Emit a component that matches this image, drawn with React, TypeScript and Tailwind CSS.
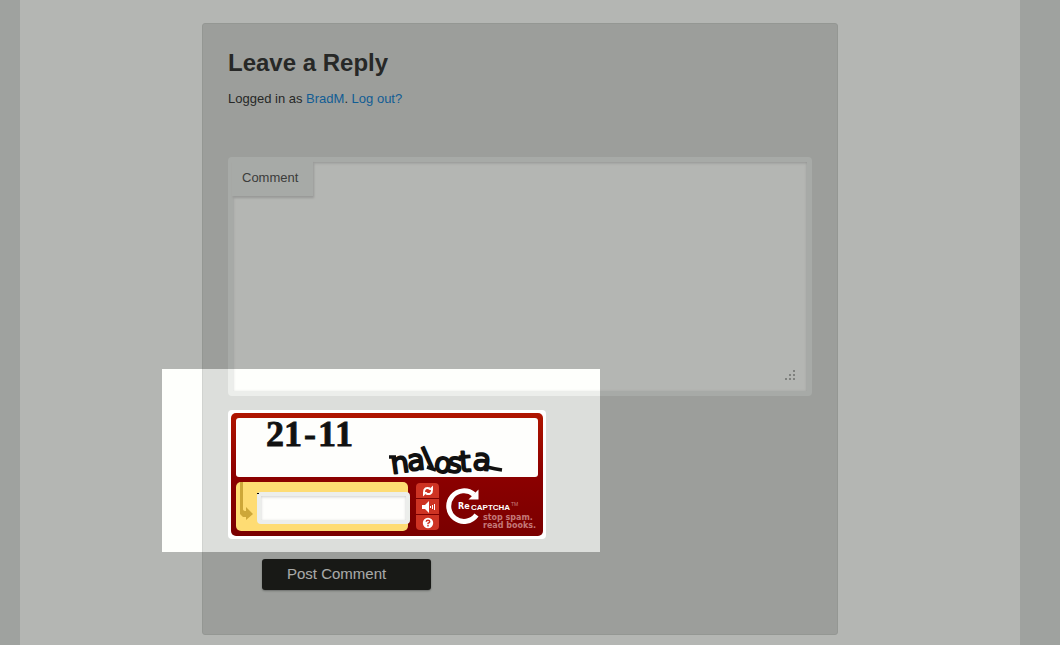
import { useState } from "react";

const letters = [
  { ch: "n", x: 392, y: 474, r: -8, size: 29 },
  { ch: "a", x: 408, y: 471, r: -6, size: 29 },
  { ch: "l", x: 428, y: 469, r: -24, size: 29 },
  { ch: "o", x: 433, y: 471, r: 10, size: 28 },
  { ch: "s", x: 447, y: 472, r: 4, size: 28 },
  { ch: "t", x: 460, y: 472, r: -4, size: 29 },
  { ch: "a", x: 472, y: 469, r: 6, size: 30 },
];

function Challenge() {
  return (
    <svg viewBox="236 418 302 59" className="block h-[59px] w-full overflow-visible rounded-[3px] bg-[#fefefc]" role="img" aria-label="Captcha challenge">
      <text x="266 284 304 318 335" y="446" fontFamily="Liberation Serif, serif" fontSize="36" fontWeight="700" fill="#111" stroke="#111" strokeWidth="0.8">21-11</text>
      <g fontFamily="DejaVu Sans, sans-serif" fill="#111" stroke="#111" strokeWidth="1.800" strokeLinejoin="round">
        {letters.map((l, i) => (
          <text key={i} x={l.x} y={l.y} fontSize={l.size} transform={`rotate(${l.r} ${l.x} ${l.y})`}>{l.ch}</text>
        ))}
      </g>
      <path d="M389 457l7 0M427 467l9 3M487 467q8 2 15 3" stroke="#111" strokeWidth="3.500" fill="none" />
    </svg>
  );
}

function Logo() {
  return (
    <svg viewBox="444 484 96 48" className="h-12 w-24 shrink-0" role="img" aria-label="reCAPTCHA">
      <path d="M474 494.500A15.300 15.300 0 1 0 476.500 515" fill="none" stroke="#fff" strokeWidth="5" />
      <path d="M478.500 489.500V499.500H468.500z" fill="#fff" />
      <text x="458" y="509" fontFamily="DejaVu Sans, sans-serif" fontSize="8" fontWeight="700" fill="#fff">Re</text>
      <text x="471" y="510" fontFamily="Liberation Sans Narrow, Liberation Sans, sans-serif" fontSize="8" fontWeight="700" fill="#fff">CAPTCHA</text>
      <text x="511" y="506" fontFamily="Liberation Sans, sans-serif" fontSize="5" fill="#c98080">TM</text>
      <g fontFamily="DejaVu Sans, sans-serif" fontSize="8" fontWeight="700" fill="#c47878">
        <text x="483" y="520">stop spam.</text>
        <text x="483" y="528">read books.</text>
      </g>
    </svg>
  );
}

function Recaptcha() {
  const [answer, setAnswer] = useState("");
  const control = "flex h-[15px] w-full items-center justify-center bg-[#ce3323]";
  return (
    <div className="mt-[14px] w-[318px] rounded-[4px] bg-white p-[3px]">
      <div className="rounded-[5px] bg-linear-to-b from-[#b01500] via-[#8c0000] to-[#7a0000] p-[5px]">
        <Challenge />
        <div className="mt-[5px] flex h-[49px] items-start">
          <div className="flex h-[49px] w-[172px] shrink-0 items-start rounded-[5px] bg-[#fedc73]">
            <svg viewBox="0 0 21 49" className="relative z-10 h-[49px] w-[21px] shrink-0 overflow-visible" aria-hidden="true">
              <path d="M4 0h3v27q0 2 3 2v-4l7 7-7 6v-3H7L4 32z" fill="#cda739" />
              <path d="M21 11h2v1h-2z" fill="#000" />
            </svg>
            <input
              aria-label="Type the two words"
              value={answer}
              onChange={(e) => setAnswer(e.target.value)}
              className="mt-[10px] h-8 w-[153px] shrink-0 rounded-[4px] border-[4px] border-[#eceeeb] bg-[#fefefc] px-1 text-sm shadow-[inset_0_1px_3px_rgba(204,204,204,0.95)] outline-none"
            />
          </div>
          <div className="mt-px ml-2 flex w-[23px] shrink-0 flex-col gap-px overflow-hidden rounded-[4px] bg-[#7a0000]">
            <button type="button" aria-label="Get a new challenge" className={control}>
              <svg viewBox="0 0 12 12" className="h-3 w-3" fill="none" stroke="#fff" strokeWidth="2">
                <path d="M2 7.500C1.800 3.500 4.500 2 8 3.500M10 4.500C10.200 8.500 7.500 10 4 8.500" />
                <path d="M11 0.500V5H6.500zM1 11.500V7H5.500z" fill="#fff" stroke="none" />
              </svg>
            </button>
            <button type="button" aria-label="Get an audio challenge" className={control}>
              <svg viewBox="0 0 14 12" className="h-3 w-[14px]" fill="#fff">
                <path d="M1 4h3l4-4v12L4 8H1zM9 5h1v2H9zM11 4h1v4h-1zM13 3h1v6h-1z" />
              </svg>
            </button>
            <button type="button" aria-label="Help" className={control}>
              <svg viewBox="0 0 12 12" className="h-3 w-3">
                <circle cx="6" cy="6" r="5.200" fill="#fff" />
                <path d="M4.200 4.800Q4.200 3.200 6 3.200T7.800 4.800Q7.800 5.600 6 6.300V7.200M6 8v1.400" fill="none" stroke="#ce3323" strokeWidth="1.400" />
              </svg>
            </button>
          </div>
          <div className="ml-[5px] mt-[2px]">
            <Logo />
          </div>
        </div>
      </div>
    </div>
  );
}

export default function App() {
  return (
    <div className="relative min-h-screen overflow-hidden bg-[#e1e3e0] pr-10 pl-5 font-['Liberation_Sans',Arial,sans-serif] text-[#373737]">
      <main className="min-h-screen bg-[#fefffc] px-[182px] pt-[23px] pb-[10px]">
        <section className="rounded-[3px] border border-[#d1d3d0] bg-[#dcdedb] px-[25px] pt-6 pb-11">
          <h1 className="text-[24px] leading-[30px] font-bold">Leave a Reply</h1>
          <p className="mt-[11px] text-[13px] leading-5">
            Logged in as <a href="#profile" className="text-[#1982d1]">BradM</a>. <a href="#logout" className="text-[#1982d1]">Log out?</a>
          </p>
          <form onSubmit={(e) => e.preventDefault()}>
            <div className="relative mt-12 rounded-[4px] bg-[#eceeeb] p-[5px]">
              <label htmlFor="comment" className="absolute top-[4px] left-[4px] flex h-[35px] w-[81px] items-center bg-[#eceeeb] pb-px pl-[10px] text-[13px] text-[#555] shadow-[1px_2px_2px_rgba(204,204,204,0.8)]">
                Comment
              </label>
              <textarea
                id="comment"
                className="block h-[229px] w-full resize-none bg-[#fefffc] px-[10px] pt-11 text-[13px] shadow-[inset_0_1px_3px_rgba(204,204,204,0.95)] outline-none"
              />
              <svg viewBox="0 0 11 11" className="absolute right-4 bottom-[15px] h-[11px] w-[11px]" fill="#b4b5b2" aria-hidden="true">
                <path d="M8 0h2v2H8zM4 4h2v2H4zM8 4h2v2H8zM0 8h2v2H0zM4 8h2v2H4zM8 8h2v2H8z" />
              </svg>
            </div>
            <Recaptcha />
            <button type="submit" className="mt-5 ml-[34px] block h-[31px] w-[169px] rounded-[3px] bg-[#222320] pl-[25px] text-left text-[15px] text-[#eee] shadow-[0_1px_2px_rgba(0,0,0,0.3)]">
              Post Comment
            </button>
          </form>
        </section>
      </main>
      <div className="pointer-events-none absolute top-[369px] left-[162px] z-20 h-[183px] w-[438px] shadow-[0_0_0_3000px_rgba(0,5,0,0.29)]" />
    </div>
  );
}
